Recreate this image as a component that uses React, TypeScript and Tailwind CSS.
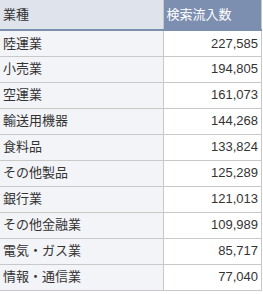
import React from "react";

const rows: [string, string][] = [
  ["陸運業", "227,585"],
  ["小売業", "194,805"],
  ["空運業", "161,073"],
  ["輸送用機器", "144,268"],
  ["食料品", "133,824"],
  ["その他製品", "125,289"],
  ["銀行業", "121,013"],
  ["その他金融業", "109,989"],
  ["電気・ガス業", "85,717"],
  ["情報・通信業", "77,040"],
];

export default function App() {
  return (
    <div className="w-[263px] h-[294px] bg-white font-['Liberation_Sans','Noto_Sans_CJK_JP',sans-serif] text-[13px] text-[#333]">
      <table className="w-[262px] border-collapse table-fixed">
        <thead>
          <tr className="h-[30px]">
            <th className="w-[163px] bg-[#dfe3ec] text-left font-normal pl-[3px] border-r border-[#c8c8c8] border-b-2 border-b-[#7d8fb0]">
              業種
            </th>
            <th className="bg-[#7d8fb0] text-left font-normal pl-[3px] text-white border-r border-[#c8c8c8] border-b-2 border-b-[#7d8fb0]">
              検索流入数
            </th>
          </tr>
        </thead>
        <tbody>
          {rows.map(([name, value]) => (
            <tr key={name} className="h-[26px]">
              <td className="bg-[#f3f4f8] pl-[3px] border-r border-b border-[#c8c8c8]">
                {name}
              </td>
              <td className="text-right pr-[3px] border-r border-b border-[#c8c8c8]">
                {value}
              </td>
            </tr>
          ))}
        </tbody>
      </table>
    </div>
  );
}
